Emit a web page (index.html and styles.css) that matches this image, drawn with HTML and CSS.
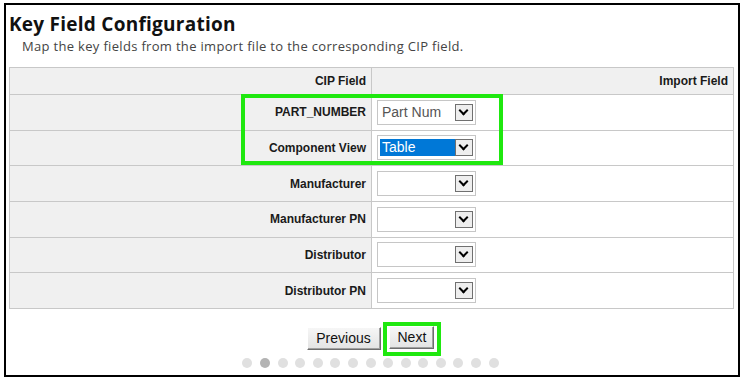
FILE: index.html
```html
<!DOCTYPE html>
<html lang="en">
<head>
    <meta charset="UTF-8">
    <title>Key Field Configuration</title>
    <link rel="stylesheet" href="styles.css">
</head>
<body>

  <div id="frame">
    <h1 class="title">Key Field Configuration</h1>
    <p class="subtitle">Map the key fields from the import file to the corresponding CIP field.</p>

    <table class="keyTable">
      <tr class="head">
        <th class="cipCol">CIP Field</th>
        <th>Import Field</th>
      </tr>
      <tr>
        <td class="cipCol">PART_NUMBER</td>
        <td><div class="fakeSelect"><span class="val">Part Num</span><span class="arrow"></span></div></td>
      </tr>
      <tr>
        <td class="cipCol">Component View</td>
        <td><div class="fakeSelect"><span class="val picked">Table</span><span class="arrow"></span></div></td>
      </tr>
      <tr>
        <td class="cipCol">Manufacturer</td>
        <td><div class="fakeSelect"><span class="val"></span><span class="arrow"></span></div></td>
      </tr>
      <tr>
        <td class="cipCol">Manufacturer PN</td>
        <td><div class="fakeSelect"><span class="val"></span><span class="arrow"></span></div></td>
      </tr>
      <tr>
        <td class="cipCol">Distributor</td>
        <td><div class="fakeSelect"><span class="val"></span><span class="arrow"></span></div></td>
      </tr>
      <tr>
        <td class="cipCol">Distributor PN</td>
        <td><div class="fakeSelect"><span class="val"></span><span class="arrow"></span></div></td>
      </tr>
    </table>

    <div class="nav">
      <button class="navBtn prev">Previous</button>
      <button class="navBtn next">Next</button>
    </div>

    <div class="dots">
      <span></span><span class="on"></span><span></span><span></span><span></span>
      <span></span><span></span><span></span><span></span><span></span>
      <span></span><span></span><span></span><span></span><span></span>
    </div>

    <!-- highlight boxes -->
    <div class="mark markFields"></div>
    <div class="mark markNext"></div>
  </div>

</body>
</html>
```

FILE: styles.css
```css
body{
  margin: 0;
  font-family: "Liberation Sans", Arial, sans-serif;
  background: #ffffff;
  color: #000;
}

#frame{
  position: relative;
  box-sizing: border-box;
  margin: 3px 0 0 4px;
  width: 736px;
  height: 374px;
  border: 2px solid #000;
  padding: 0 3px;
}

.title{
  margin: 0;
  padding-top: 8px;
  font-family: "Open Sans", "Liberation Sans", sans-serif;
  font-size: 19px;
  letter-spacing: 0.25px;
  line-height: 23px;
  font-weight: 700;
  color: #111;
}

.subtitle{
  margin: 2px 0 0 13px;
  font-family: "Open Sans", "Liberation Sans", sans-serif;
  font-size: 13px;
  letter-spacing: 0.32px;
  line-height: 16px;
  color: #444;
}

.keyTable{
  margin-top: 13px;
  width: 725px;
  border-collapse: collapse;
  font-size: 12px;
  font-weight: 700;
  color: #1a1a1a;
}

.keyTable th,
.keyTable td{
  border: 1px solid #c8c8c8;
  text-align: right;
  padding: 0 5px;
}

.keyTable th{
  height: 26px;
  background: #f0f0f0;
}

.keyTable td{
  height: 34.67px;
  background: #fff;
}

.keyTable td.cipCol,
.keyTable th.cipCol{
  width: 351px;
  background: #f0f0f0;
}

.keyTable td:last-child{
  text-align: left;
}

/* old-style windows dropdown */
.fakeSelect{
  display: flex;
  align-items: center;
  box-sizing: border-box;
  width: 99px;
  height: 25px;
  border: 1px solid #c6c6c6;
  padding: 2px;
  background: #fff;
}

.fakeSelect .val{
  flex: 1;
  height: 17px;
  line-height: 17px;
  padding-left: 2px;
  font-size: 14px;
  font-weight: 400;
  color: #555;
}

.fakeSelect .val.picked{
  background: #0078d7;
  color: #fff;
}

.fakeSelect .arrow{
  position: relative;
  box-sizing: border-box;
  width: 18px;
  height: 17px;
  border: 1px solid #707070;
  background: #eeeeee;
}

.fakeSelect .arrow:after{
  content: "";
  position: absolute;
  left: 4px;
  top: 2px;
  width: 5px;
  height: 5px;
  border: solid #000;
  border-width: 0 2px 2px 0;
  transform: rotate(45deg);
}

.nav{
  display: flex;
  justify-content: center;
  gap: 8px;
  margin-top: 17px;
  padding-right: 4px;
}

.navBtn{
  font-family: "Liberation Sans", Arial, sans-serif;
  font-size: 14px;
  color: #111;
  height: 23px;
  padding: 0 8px;
  background: linear-gradient(#f6f6f6, #e3e3e3);
  border: 1px solid;
  border-color: #fff #6d6d6d #6d6d6d #fff;
  box-shadow: inset -1px -1px 0 #a0a0a0;
}

.navBtn.prev{
  width: 74px;
  margin-top: 1px;
}

.navBtn.next{
  width: 45px;
}

.dots{
  display: flex;
  justify-content: center;
  gap: 7.6px;
  margin-top: 8px;
  padding-right: 3px;
}

.dots span{
  width: 10px;
  height: 10px;
  border-radius: 50%;
  background: #e0e0e0;
}

.dots span.on{
  background: #b3b3b3;
}

.mark{
  position: absolute;
  border: 4px solid #1fe80f;
}

.markFields{
  left: 235px;
  top: 89px;
  width: 254px;
  height: 63px;
}

.markNext{
  left: 377px;
  top: 317px;
  width: 50px;
  height: 26px;
}
```
